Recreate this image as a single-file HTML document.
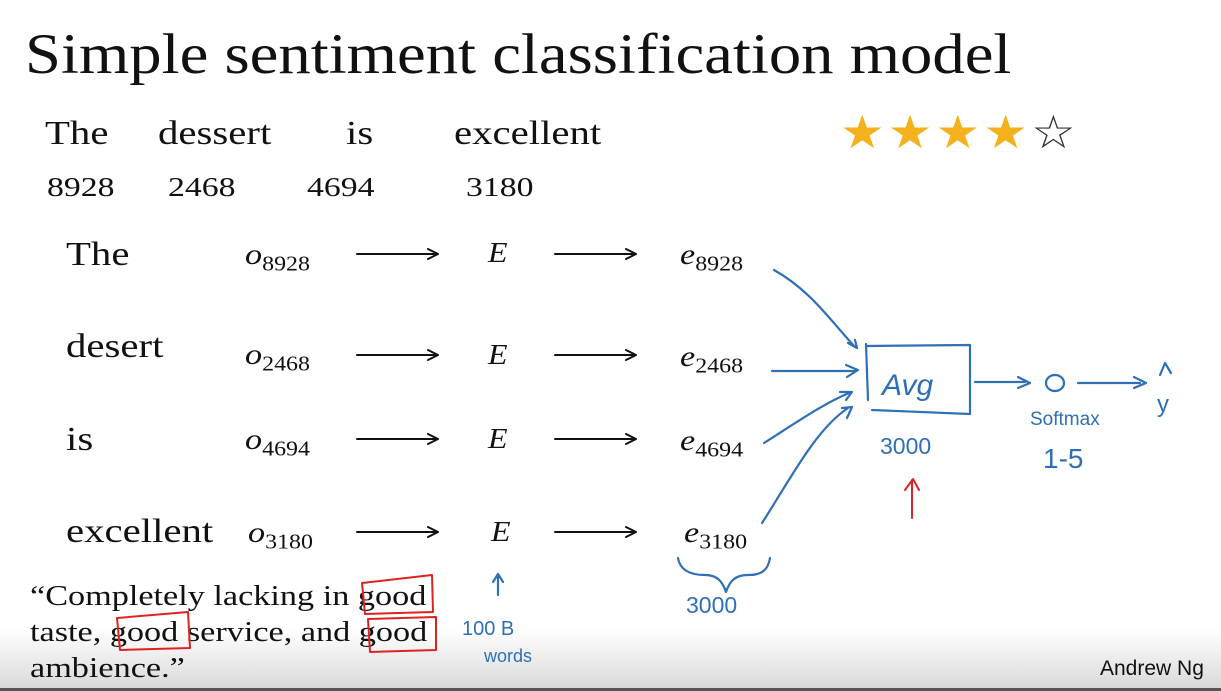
<!DOCTYPE html>
<html><head><meta charset="utf-8"><style>
html,body{margin:0;padding:0}
body{width:1221px;height:691px;position:relative;overflow:hidden;background:#fff;font-family:"Liberation Serif",serif;color:#111}
.t{position:absolute;white-space:nowrap;line-height:1;transform-origin:0 0;transform:scaleX(1.2)}
.i{font-style:italic;transform:scaleX(1.14)}
sub{font-size:0.7em;font-style:normal;vertical-align:-0.3em}
.band{position:absolute;left:0;top:628px;width:1221px;height:63px;background:linear-gradient(#fff,#e4e4e4 70%,#d6d6d6)}
</style></head><body>
<div class="band"></div>
<div style="position:absolute;left:0;bottom:0;width:1221px;height:3px;background:#555"></div>
<div class="t" style="left:25px;top:26px;font-size:57px;transform:scaleX(1.135)">Simple sentiment classification model</div>
<div class="t" style="left:45px;top:117px;font-size:34px">The</div>
<div class="t" style="left:158px;top:117px;font-size:34px">dessert</div>
<div class="t" style="left:346px;top:117px;font-size:34px">is</div>
<div class="t" style="left:454px;top:117px;font-size:34px">excellent</div>
<div class="t" style="left:47px;top:174px;font-size:27px;transform:scaleX(1.25)">8928</div>
<div class="t" style="left:168px;top:174px;font-size:27px;transform:scaleX(1.25)">2468</div>
<div class="t" style="left:307px;top:174px;font-size:27px;transform:scaleX(1.25)">4694</div>
<div class="t" style="left:466px;top:174px;font-size:27px;transform:scaleX(1.25)">3180</div>
<div class="t" style="left:840px;top:110px;font-size:46px;color:#f3b21c;letter-spacing:3px;transform:scaleX(1.08)">★★★★<span style="color:#333">☆</span></div>

<div class="t" style="left:66px;top:238px;font-size:34px">The</div>
<div class="t" style="left:66px;top:330px;font-size:34px">desert</div>
<div class="t" style="left:66px;top:423px;font-size:34px">is</div>
<div class="t" style="left:66px;top:515px;font-size:34px">excellent</div>

<div class="t i" style="left:245px;top:240px;font-size:30px">o<sub>8928</sub></div>
<div class="t i" style="left:245px;top:340px;font-size:30px">o<sub>2468</sub></div>
<div class="t i" style="left:245px;top:425px;font-size:30px">o<sub>4694</sub></div>
<div class="t i" style="left:248px;top:518px;font-size:30px">o<sub>3180</sub></div>
<div class="t i" style="left:488px;top:240px;font-size:28px">E</div>
<div class="t i" style="left:488px;top:342px;font-size:28px">E</div>
<div class="t i" style="left:488px;top:426px;font-size:28px">E</div>
<div class="t i" style="left:491px;top:519px;font-size:28px">E</div>
<div class="t i" style="left:680px;top:240px;font-size:30px">e<sub>8928</sub></div>
<div class="t i" style="left:680px;top:342px;font-size:30px">e<sub>2468</sub></div>
<div class="t i" style="left:680px;top:426px;font-size:30px">e<sub>4694</sub></div>
<div class="t i" style="left:684px;top:518px;font-size:30px">e<sub>3180</sub></div>

<div class="t" style="left:30px;top:578px;font-size:29px;line-height:36px;transform:scaleX(1.18)">“Completely lacking in good<br>taste, good service, and good<br>ambience.”</div>
<div class="t" style="left:1100px;top:658px;font-size:21px;font-family:'Liberation Sans',sans-serif;transform:none">Andrew Ng</div>

<svg width="1221" height="691" style="position:absolute;left:0;top:0" fill="none" stroke-linecap="round" stroke-linejoin="round">
<g stroke="#111" stroke-width="2">
<path d="M357 254H436M428 249L438 254L428 259"/><path d="M555 254H634M626 249L636 254L626 259"/>
<path d="M357 355H436M428 350L438 355L428 360"/><path d="M555 355H634M626 350L636 355L626 360"/>
<path d="M357 439H436M428 434L438 439L428 444"/><path d="M555 439H634M626 434L636 439L626 444"/>
<path d="M357 532H436M428 527L438 532L428 537"/><path d="M555 532H634M626 527L636 532L626 537"/>
</g>
<g stroke="#2f6fb5" stroke-width="2.2">
<path d="M774 270C810 290 830 320 855 347M848 343L857 348L855 340"/>
<path d="M772 371H855M846 365L858 370L847 377"/>
<path d="M764 443C800 420 825 403 849 393M840 392L852 392L846 400"/>
<path d="M762 523C790 480 815 430 848 408M842 408L852 407L847 418"/>
<path d="M867 346L970 345L970 414M866 344L868 400M872 410L970 414"/>
<text x="882" y="395" font-family="Liberation Sans,sans-serif" font-size="30" fill="#2f6fb5" stroke="none" font-style="italic">Avg</text>
<path d="M975 382H1025M1018 377L1030 383L1018 388"/>
<ellipse cx="1055" cy="383" rx="9" ry="8"/>
<path d="M1078 383H1140M1134 377L1146 383L1134 388"/>
<path d="M1160 375L1165 363L1171 373"/>
<text x="1030" y="425" font-family="Liberation Sans,sans-serif" font-size="19" fill="#2f6fb5" stroke="none">Softmax</text>
<text x="1043" y="468" font-family="Liberation Sans,sans-serif" font-size="28" fill="#2f6fb5" stroke="none">1-5</text>
<text x="1157" y="412" font-family="Liberation Sans,sans-serif" font-size="24" fill="#2f6fb5" stroke="none">y</text>
<text x="880" y="454" font-family="Liberation Sans,sans-serif" font-size="23" fill="#2f6fb5" stroke="none">3000</text>
<path d="M678 558C680 570 690 575 705 575C716 575 722 580 726 592C730 580 736 575 748 575C762 575 768 570 770 558"/>
<text x="686" y="613" font-family="Liberation Sans,sans-serif" font-size="23" fill="#2f6fb5" stroke="none">3000</text>
<path d="M498 595V575M493 582L498 574L503 582"/>
<text x="462" y="635" font-family="Liberation Sans,sans-serif" font-size="20" fill="#2f6fb5" stroke="none">100 B</text>
<text x="484" y="662" font-family="Liberation Sans,sans-serif" font-size="18" fill="#2f6fb5" stroke="none">words</text>
</g>
<g stroke="#d22" stroke-width="2">
<path d="M912 518V480M905 490L913 479L919 490"/>
<path d="M362 583L432 575L433 612L365 614Z"/>
<path d="M117 618L188 612L190 648L120 650Z"/>
<path d="M368 619L436 617L436 650L370 652Z"/>
</g>
</svg>
</body></html>
